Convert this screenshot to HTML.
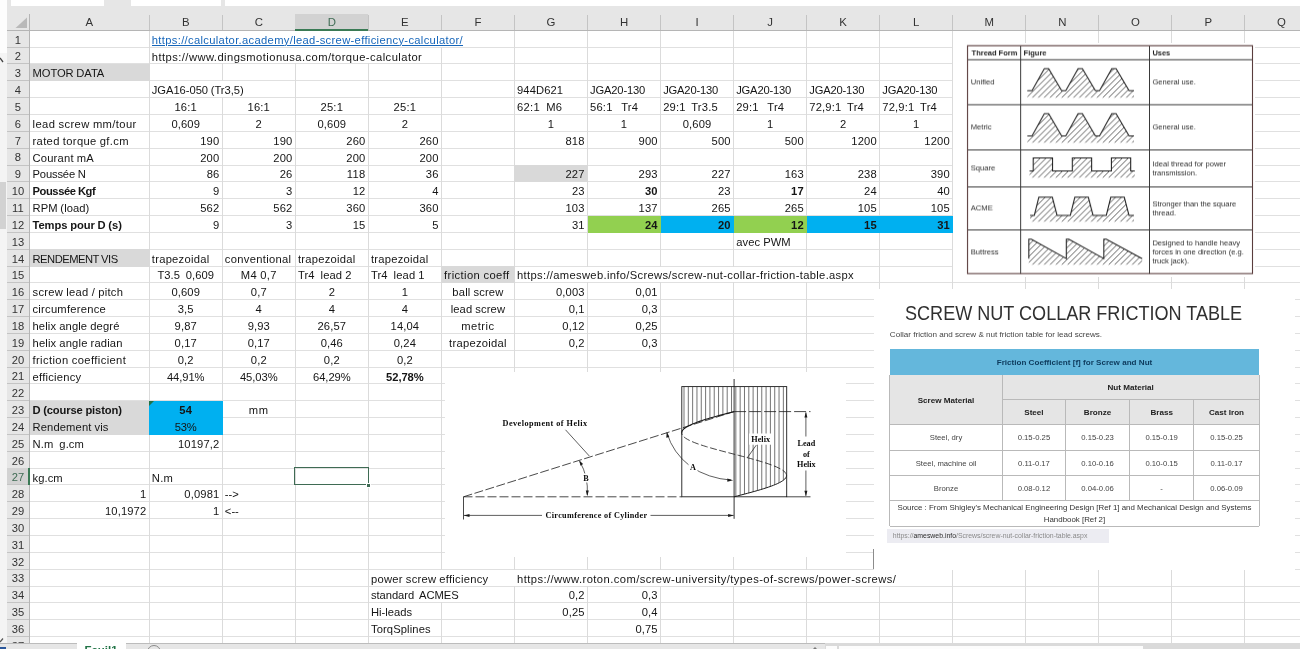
<!DOCTYPE html><html><head><meta charset="utf-8"><title>sheet</title><style>

html,body{margin:0;padding:0}
body{width:1300px;height:649px;overflow:hidden;position:relative;background:#fff;font-family:"Liberation Sans",sans-serif;color:#1a1a1a}
div,span,svg{position:absolute}
.c{font-size:11.2px;line-height:16.84px;height:16.84px;white-space:pre;color:#151515;word-spacing:-0.3px}
.b{font-weight:bold}
.r{text-align:right}.m{text-align:center}
.hl{background:#e0e0e0;height:1px}
.vl{background:#dbdbdb;width:1px}
.ch{font-size:11.4px;color:#333;text-align:center;line-height:16px;height:16px;top:14px}
.rh{font-size:11.2px;color:#333;text-align:center;line-height:16.84px;height:16.84px;left:6.5px;width:22.8px}

</style></head><body><div id="root" style="left:0;top:0;width:1300px;height:649px;overflow:hidden;will-change:transform">
<div style="left:6.5px;top:0;width:1293.5px;height:30.3px;background:#e6e6e6"></div>
<div style="left:0;top:0;width:6.5px;height:53px;background:#fdfdfd"></div>
<div style="left:0;top:53px;width:6.5px;height:596px;background:#f4f4f4"></div>
<div style="left:0;top:182.4px;width:5.5px;height:47px;background:#d2d2d2"></div>
<div style="left:6.5px;top:30.3px;width:22.8px;height:613px;background:#e6e6e6"></div>
<div style="left:10.5px;top:0;width:93.5px;height:5.5px;background:#fff"></div>
<div style="left:130.5px;top:0;width:90px;height:5.5px;background:#fff"></div>
<div style="left:224.5px;top:0;width:1076px;height:5.5px;background:#fff"></div>
<svg style="left:14px;top:17px" width="14" height="12"><polygon points="13,0.5 13,11 1.5,11" fill="#b9b9b9"/></svg>
<div class="hl" style="left:29.3px;top:46.64px;width:1270.7px"></div>
<div class="hl" style="left:29.3px;top:63.48px;width:1270.7px"></div>
<div class="hl" style="left:29.3px;top:80.32px;width:1270.7px"></div>
<div class="hl" style="left:29.3px;top:97.16px;width:1270.7px"></div>
<div class="hl" style="left:29.3px;top:114.00px;width:1270.7px"></div>
<div class="hl" style="left:29.3px;top:130.84px;width:1270.7px"></div>
<div class="hl" style="left:29.3px;top:147.68px;width:1270.7px"></div>
<div class="hl" style="left:29.3px;top:164.52px;width:1270.7px"></div>
<div class="hl" style="left:29.3px;top:181.36px;width:1270.7px"></div>
<div class="hl" style="left:29.3px;top:198.20px;width:1270.7px"></div>
<div class="hl" style="left:29.3px;top:215.04px;width:1270.7px"></div>
<div class="hl" style="left:29.3px;top:231.88px;width:1270.7px"></div>
<div class="hl" style="left:29.3px;top:248.72px;width:1270.7px"></div>
<div class="hl" style="left:29.3px;top:265.56px;width:1270.7px"></div>
<div class="hl" style="left:29.3px;top:282.40px;width:1270.7px"></div>
<div class="hl" style="left:29.3px;top:299.24px;width:1270.7px"></div>
<div class="hl" style="left:29.3px;top:316.08px;width:1270.7px"></div>
<div class="hl" style="left:29.3px;top:332.92px;width:1270.7px"></div>
<div class="hl" style="left:29.3px;top:349.76px;width:1270.7px"></div>
<div class="hl" style="left:29.3px;top:366.60px;width:1270.7px"></div>
<div class="hl" style="left:29.3px;top:383.44px;width:1270.7px"></div>
<div class="hl" style="left:29.3px;top:400.28px;width:1270.7px"></div>
<div class="hl" style="left:29.3px;top:417.12px;width:1270.7px"></div>
<div class="hl" style="left:29.3px;top:433.96px;width:1270.7px"></div>
<div class="hl" style="left:29.3px;top:450.80px;width:1270.7px"></div>
<div class="hl" style="left:29.3px;top:467.64px;width:1270.7px"></div>
<div class="hl" style="left:29.3px;top:484.48px;width:1270.7px"></div>
<div class="hl" style="left:29.3px;top:501.32px;width:1270.7px"></div>
<div class="hl" style="left:29.3px;top:518.16px;width:1270.7px"></div>
<div class="hl" style="left:29.3px;top:535.00px;width:1270.7px"></div>
<div class="hl" style="left:29.3px;top:551.84px;width:1270.7px"></div>
<div class="hl" style="left:29.3px;top:568.68px;width:1270.7px"></div>
<div class="hl" style="left:29.3px;top:585.52px;width:1270.7px"></div>
<div class="hl" style="left:29.3px;top:602.36px;width:1270.7px"></div>
<div class="hl" style="left:29.3px;top:619.20px;width:1270.7px"></div>
<div class="hl" style="left:29.3px;top:636.04px;width:1270.7px"></div>
<div class="hl" style="left:29.3px;top:652.88px;width:1270.7px"></div>
<div class="vl" style="left:148.70px;top:30.3px;height:612.7px"></div>
<div class="vl" style="left:221.75px;top:30.3px;height:612.7px"></div>
<div class="vl" style="left:294.80px;top:30.3px;height:612.7px"></div>
<div class="vl" style="left:367.85px;top:30.3px;height:612.7px"></div>
<div class="vl" style="left:440.90px;top:30.3px;height:612.7px"></div>
<div class="vl" style="left:513.95px;top:30.3px;height:612.7px"></div>
<div class="vl" style="left:587.00px;top:30.3px;height:612.7px"></div>
<div class="vl" style="left:660.05px;top:30.3px;height:612.7px"></div>
<div class="vl" style="left:733.10px;top:30.3px;height:612.7px"></div>
<div class="vl" style="left:806.15px;top:30.3px;height:612.7px"></div>
<div class="vl" style="left:879.20px;top:30.3px;height:612.7px"></div>
<div class="vl" style="left:952.25px;top:30.3px;height:612.7px"></div>
<div class="vl" style="left:1025.30px;top:30.3px;height:612.7px"></div>
<div class="vl" style="left:1098.35px;top:30.3px;height:612.7px"></div>
<div class="vl" style="left:1171.40px;top:30.3px;height:612.7px"></div>
<div class="vl" style="left:1244.45px;top:30.3px;height:612.7px"></div>
<div class="vl" style="left:1317.50px;top:30.3px;height:612.7px"></div>
<div style="left:29.30px;top:63.98px;width:120.40px;height:17.34px;background:#d9d9d9"></div>
<div style="left:29.30px;top:249.22px;width:120.40px;height:17.34px;background:#d9d9d9"></div>
<div style="left:441.40px;top:266.06px;width:73.55px;height:17.34px;background:#d9d9d9"></div>
<div style="left:514.45px;top:165.02px;width:73.55px;height:17.34px;background:#d9d9d9"></div>
<div style="left:29.30px;top:400.78px;width:120.40px;height:17.34px;background:#d9d9d9"></div>
<div style="left:29.30px;top:417.62px;width:120.40px;height:17.34px;background:#d9d9d9"></div>
<div style="left:149.20px;top:400.78px;width:73.55px;height:17.34px;background:#00b0f0"></div>
<div style="left:149.20px;top:417.62px;width:73.55px;height:17.34px;background:#00b0f0"></div>
<div style="left:587.50px;top:215.54px;width:73.55px;height:17.34px;background:#92d050"></div>
<div style="left:660.55px;top:215.54px;width:73.55px;height:17.34px;background:#00b0f0"></div>
<div style="left:733.60px;top:215.54px;width:73.55px;height:17.34px;background:#92d050"></div>
<div style="left:806.65px;top:215.54px;width:73.55px;height:17.34px;background:#00b0f0"></div>
<div style="left:879.70px;top:215.54px;width:73.55px;height:17.34px;background:#00b0f0"></div>
<div style="left:6.5px;top:29.8px;width:1293.5px;height:1px;background:#b5b5b5"></div>
<div style="left:28.8px;top:14px;width:1px;height:629px;background:#b5b5b5"></div>
<div style="left:148.70px;top:15px;width:1px;height:15px;background:#c4c4c4"></div>
<div style="left:221.75px;top:15px;width:1px;height:15px;background:#c4c4c4"></div>
<div style="left:294.80px;top:15px;width:1px;height:15px;background:#c4c4c4"></div>
<div style="left:367.85px;top:15px;width:1px;height:15px;background:#c4c4c4"></div>
<div style="left:440.90px;top:15px;width:1px;height:15px;background:#c4c4c4"></div>
<div style="left:513.95px;top:15px;width:1px;height:15px;background:#c4c4c4"></div>
<div style="left:587.00px;top:15px;width:1px;height:15px;background:#c4c4c4"></div>
<div style="left:660.05px;top:15px;width:1px;height:15px;background:#c4c4c4"></div>
<div style="left:733.10px;top:15px;width:1px;height:15px;background:#c4c4c4"></div>
<div style="left:806.15px;top:15px;width:1px;height:15px;background:#c4c4c4"></div>
<div style="left:879.20px;top:15px;width:1px;height:15px;background:#c4c4c4"></div>
<div style="left:952.25px;top:15px;width:1px;height:15px;background:#c4c4c4"></div>
<div style="left:1025.30px;top:15px;width:1px;height:15px;background:#c4c4c4"></div>
<div style="left:1098.35px;top:15px;width:1px;height:15px;background:#c4c4c4"></div>
<div style="left:1171.40px;top:15px;width:1px;height:15px;background:#c4c4c4"></div>
<div style="left:1244.45px;top:15px;width:1px;height:15px;background:#c4c4c4"></div>
<div style="left:1317.50px;top:15px;width:1px;height:15px;background:#c4c4c4"></div>
<div style="left:6.5px;top:46.64px;width:22.8px;height:1px;background:#c4c4c4"></div>
<div style="left:6.5px;top:63.48px;width:22.8px;height:1px;background:#c4c4c4"></div>
<div style="left:6.5px;top:80.32px;width:22.8px;height:1px;background:#c4c4c4"></div>
<div style="left:6.5px;top:97.16px;width:22.8px;height:1px;background:#c4c4c4"></div>
<div style="left:6.5px;top:114.00px;width:22.8px;height:1px;background:#c4c4c4"></div>
<div style="left:6.5px;top:130.84px;width:22.8px;height:1px;background:#c4c4c4"></div>
<div style="left:6.5px;top:147.68px;width:22.8px;height:1px;background:#c4c4c4"></div>
<div style="left:6.5px;top:164.52px;width:22.8px;height:1px;background:#c4c4c4"></div>
<div style="left:6.5px;top:181.36px;width:22.8px;height:1px;background:#c4c4c4"></div>
<div style="left:6.5px;top:198.20px;width:22.8px;height:1px;background:#c4c4c4"></div>
<div style="left:6.5px;top:215.04px;width:22.8px;height:1px;background:#c4c4c4"></div>
<div style="left:6.5px;top:231.88px;width:22.8px;height:1px;background:#c4c4c4"></div>
<div style="left:6.5px;top:248.72px;width:22.8px;height:1px;background:#c4c4c4"></div>
<div style="left:6.5px;top:265.56px;width:22.8px;height:1px;background:#c4c4c4"></div>
<div style="left:6.5px;top:282.40px;width:22.8px;height:1px;background:#c4c4c4"></div>
<div style="left:6.5px;top:299.24px;width:22.8px;height:1px;background:#c4c4c4"></div>
<div style="left:6.5px;top:316.08px;width:22.8px;height:1px;background:#c4c4c4"></div>
<div style="left:6.5px;top:332.92px;width:22.8px;height:1px;background:#c4c4c4"></div>
<div style="left:6.5px;top:349.76px;width:22.8px;height:1px;background:#c4c4c4"></div>
<div style="left:6.5px;top:366.60px;width:22.8px;height:1px;background:#c4c4c4"></div>
<div style="left:6.5px;top:383.44px;width:22.8px;height:1px;background:#c4c4c4"></div>
<div style="left:6.5px;top:400.28px;width:22.8px;height:1px;background:#c4c4c4"></div>
<div style="left:6.5px;top:417.12px;width:22.8px;height:1px;background:#c4c4c4"></div>
<div style="left:6.5px;top:433.96px;width:22.8px;height:1px;background:#c4c4c4"></div>
<div style="left:6.5px;top:450.80px;width:22.8px;height:1px;background:#c4c4c4"></div>
<div style="left:6.5px;top:467.64px;width:22.8px;height:1px;background:#c4c4c4"></div>
<div style="left:6.5px;top:484.48px;width:22.8px;height:1px;background:#c4c4c4"></div>
<div style="left:6.5px;top:501.32px;width:22.8px;height:1px;background:#c4c4c4"></div>
<div style="left:6.5px;top:518.16px;width:22.8px;height:1px;background:#c4c4c4"></div>
<div style="left:6.5px;top:535.00px;width:22.8px;height:1px;background:#c4c4c4"></div>
<div style="left:6.5px;top:551.84px;width:22.8px;height:1px;background:#c4c4c4"></div>
<div style="left:6.5px;top:568.68px;width:22.8px;height:1px;background:#c4c4c4"></div>
<div style="left:6.5px;top:585.52px;width:22.8px;height:1px;background:#c4c4c4"></div>
<div style="left:6.5px;top:602.36px;width:22.8px;height:1px;background:#c4c4c4"></div>
<div style="left:6.5px;top:619.20px;width:22.8px;height:1px;background:#c4c4c4"></div>
<div style="left:6.5px;top:636.04px;width:22.8px;height:1px;background:#c4c4c4"></div>
<div style="left:6.5px;top:652.88px;width:22.8px;height:1px;background:#c4c4c4"></div>
<div style="left:295.30px;top:14px;width:73.05px;height:15.3px;background:#d2d2d2"></div>
<div style="left:295.30px;top:29.3px;width:73.05px;height:1.4px;background:#3a7a55"></div>
<div style="left:6.5px;top:468.14px;width:22px;height:16.34px;background:#d2d2d2"></div>
<div style="left:28.3px;top:468.14px;width:1.4px;height:16.84px;background:#3a7a55"></div>
<div class="ch" style="left:29.30px;width:119.90px;">A</div>
<div class="ch" style="left:149.20px;width:73.05px;">B</div>
<div class="ch" style="left:222.25px;width:73.05px;">C</div>
<div class="ch" style="left:295.30px;width:73.05px; color:#3f6b54;">D</div>
<div class="ch" style="left:368.35px;width:73.05px;">E</div>
<div class="ch" style="left:441.40px;width:73.05px;">F</div>
<div class="ch" style="left:514.45px;width:73.05px;">G</div>
<div class="ch" style="left:587.50px;width:73.05px;">H</div>
<div class="ch" style="left:660.55px;width:73.05px;">I</div>
<div class="ch" style="left:733.60px;width:73.05px;">J</div>
<div class="ch" style="left:806.65px;width:73.05px;">K</div>
<div class="ch" style="left:879.70px;width:73.05px;">L</div>
<div class="ch" style="left:952.75px;width:73.05px;">M</div>
<div class="ch" style="left:1025.80px;width:73.05px;">N</div>
<div class="ch" style="left:1098.85px;width:73.05px;">O</div>
<div class="ch" style="left:1171.90px;width:73.05px;">P</div>
<div class="ch" style="left:1244.95px;width:73.05px;">Q</div>
<div class="rh" style="top:31.60px;">1</div>
<div class="rh" style="top:48.44px;">2</div>
<div class="rh" style="top:65.28px;">3</div>
<div class="rh" style="top:82.12px;">4</div>
<div class="rh" style="top:98.96px;">5</div>
<div class="rh" style="top:115.80px;">6</div>
<div class="rh" style="top:132.64px;">7</div>
<div class="rh" style="top:149.48px;">8</div>
<div class="rh" style="top:166.32px;">9</div>
<div class="rh" style="top:183.16px;">10</div>
<div class="rh" style="top:200.00px;">11</div>
<div class="rh" style="top:216.84px;">12</div>
<div class="rh" style="top:233.68px;">13</div>
<div class="rh" style="top:250.52px;">14</div>
<div class="rh" style="top:267.36px;">15</div>
<div class="rh" style="top:284.20px;">16</div>
<div class="rh" style="top:301.04px;">17</div>
<div class="rh" style="top:317.88px;">18</div>
<div class="rh" style="top:334.72px;">19</div>
<div class="rh" style="top:351.56px;">20</div>
<div class="rh" style="top:368.40px;">21</div>
<div class="rh" style="top:385.24px;">22</div>
<div class="rh" style="top:402.08px;">23</div>
<div class="rh" style="top:418.92px;">24</div>
<div class="rh" style="top:435.76px;">25</div>
<div class="rh" style="top:452.60px;">26</div>
<div class="rh" style="top:469.44px; color:#3f6b54;">27</div>
<div class="rh" style="top:486.28px;">28</div>
<div class="rh" style="top:503.12px;">29</div>
<div class="rh" style="top:519.96px;">30</div>
<div class="rh" style="top:536.80px;">31</div>
<div class="rh" style="top:553.64px;">32</div>
<div class="rh" style="top:570.48px;">33</div>
<div class="rh" style="top:587.32px;">34</div>
<div class="rh" style="top:604.16px;">35</div>
<div class="rh" style="top:621.00px;">36</div>
<div class="rh" style="top:637.84px;">37</div>
<div class="c" style="left:151.80px;top:30.80px;height:15.84px;overflow:hidden;background:#fff;padding-right:2px;color:#1666ba;text-decoration:underline;text-decoration-thickness:0.8px;text-underline-offset:1.5px;letter-spacing:0.33px;"><span style="position:relative;top:0.9px">https://calculator.academy/lead-screw-efficiency-calculator/</span></div>
<div class="c" style="left:151.80px;top:47.64px;height:15.84px;overflow:hidden;background:#fff;padding-right:2px;letter-spacing:0.44px;"><span style="position:relative;top:0.9px">https://www.dingsmotionusa.com/torque-calculator</span></div>
<div class="c" style="left:32.50px;top:65.38px;letter-spacing:-0.07px;">MOTOR DATA</div>
<div class="c" style="left:151.80px;top:81.32px;height:15.84px;overflow:hidden;background:#fff;padding-right:2px;letter-spacing:-0.04px;"><span style="position:relative;top:0.9px">JGA16-050 (Tr3,5)</span></div>
<div class="c" style="left:517.05px;top:82.22px;letter-spacing:0.09px;">944D621</div>
<div class="c" style="left:590.10px;top:82.22px;letter-spacing:-0.18px;">JGA20-130</div>
<div class="c" style="left:663.15px;top:82.22px;letter-spacing:-0.18px;">JGA20-130</div>
<div class="c" style="left:736.20px;top:82.22px;letter-spacing:-0.18px;">JGA20-130</div>
<div class="c" style="left:809.25px;top:82.22px;letter-spacing:-0.18px;">JGA20-130</div>
<div class="c" style="left:882.30px;top:82.22px;letter-spacing:-0.18px;">JGA20-130</div>
<div class="c m" style="left:149.20px;width:73.05px;top:99.06px;letter-spacing:0.18px;">16:1</div>
<div class="c m" style="left:222.25px;width:73.05px;top:99.06px;letter-spacing:0.18px;">16:1</div>
<div class="c m" style="left:295.30px;width:73.05px;top:99.06px;letter-spacing:0.18px;">25:1</div>
<div class="c m" style="left:368.35px;width:73.05px;top:99.06px;letter-spacing:0.18px;">25:1</div>
<div class="c" style="left:517.05px;top:99.06px;letter-spacing:0.30px;">62:1  M6</div>
<div class="c" style="left:590.10px;top:99.06px;letter-spacing:0.16px;">56:1   Tr4</div>
<div class="c" style="left:663.15px;top:99.06px;letter-spacing:0.16px;">29:1  Tr3.5</div>
<div class="c" style="left:736.20px;top:99.06px;letter-spacing:0.16px;">29:1   Tr4</div>
<div class="c" style="left:809.25px;top:99.06px;letter-spacing:0.16px;">72,9:1  Tr4</div>
<div class="c" style="left:882.30px;top:99.06px;letter-spacing:0.16px;">72,9:1  Tr4</div>
<div class="c" style="left:32.50px;top:115.90px;letter-spacing:0.40px;">lead screw mm/tour</div>
<div class="c m" style="left:149.20px;width:73.05px;top:115.90px;letter-spacing:0.13px;">0,609</div>
<div class="c m" style="left:222.25px;width:73.05px;top:115.90px;letter-spacing:0.16px;">2</div>
<div class="c m" style="left:295.30px;width:73.05px;top:115.90px;letter-spacing:0.13px;">0,609</div>
<div class="c m" style="left:368.35px;width:73.05px;top:115.90px;letter-spacing:0.16px;">2</div>
<div class="c m" style="left:514.45px;width:73.05px;top:115.90px;letter-spacing:0.16px;">1</div>
<div class="c m" style="left:587.50px;width:73.05px;top:115.90px;letter-spacing:0.16px;">1</div>
<div class="c m" style="left:660.55px;width:73.05px;top:115.90px;letter-spacing:0.13px;">0,609</div>
<div class="c m" style="left:733.60px;width:73.05px;top:115.90px;letter-spacing:0.16px;">1</div>
<div class="c m" style="left:806.65px;width:73.05px;top:115.90px;letter-spacing:0.16px;">2</div>
<div class="c m" style="left:879.70px;width:73.05px;top:115.90px;letter-spacing:0.16px;">1</div>
<div class="c" style="left:32.50px;top:132.74px;letter-spacing:0.34px;">rated torque gf.cm</div>
<div class="c r" style="left:149.20px;width:70.21px;top:132.74px;letter-spacing:0.16px;">190</div>
<div class="c r" style="left:222.25px;width:70.21px;top:132.74px;letter-spacing:0.16px;">190</div>
<div class="c r" style="left:295.30px;width:70.21px;top:132.74px;letter-spacing:0.16px;">260</div>
<div class="c r" style="left:368.35px;width:70.21px;top:132.74px;letter-spacing:0.16px;">260</div>
<div class="c r" style="left:514.45px;width:70.21px;top:132.74px;letter-spacing:0.16px;">818</div>
<div class="c r" style="left:587.50px;width:70.21px;top:132.74px;letter-spacing:0.16px;">900</div>
<div class="c r" style="left:660.55px;width:70.21px;top:132.74px;letter-spacing:0.16px;">500</div>
<div class="c r" style="left:733.60px;width:70.21px;top:132.74px;letter-spacing:0.16px;">500</div>
<div class="c r" style="left:806.65px;width:70.21px;top:132.74px;letter-spacing:0.16px;">1200</div>
<div class="c r" style="left:879.70px;width:70.21px;top:132.74px;letter-spacing:0.16px;">1200</div>
<div class="c" style="left:32.50px;top:149.58px;letter-spacing:0.20px;">Courant mA</div>
<div class="c r" style="left:149.20px;width:70.21px;top:149.58px;letter-spacing:0.16px;">200</div>
<div class="c r" style="left:222.25px;width:70.21px;top:149.58px;letter-spacing:0.16px;">200</div>
<div class="c r" style="left:295.30px;width:70.21px;top:149.58px;letter-spacing:0.16px;">200</div>
<div class="c r" style="left:368.35px;width:70.21px;top:149.58px;letter-spacing:0.16px;">200</div>
<div class="c" style="left:32.50px;top:166.42px;letter-spacing:-0.15px;">Poussée N</div>
<div class="c r" style="left:149.20px;width:70.21px;top:166.42px;letter-spacing:0.16px;">86</div>
<div class="c r" style="left:222.25px;width:70.21px;top:166.42px;letter-spacing:0.16px;">26</div>
<div class="c r" style="left:295.30px;width:70.48px;top:166.42px;letter-spacing:0.43px;">118</div>
<div class="c r" style="left:368.35px;width:70.21px;top:166.42px;letter-spacing:0.16px;">36</div>
<div class="c r" style="left:514.45px;width:70.21px;top:166.42px;letter-spacing:0.16px;">227</div>
<div class="c r" style="left:587.50px;width:70.21px;top:166.42px;letter-spacing:0.16px;">293</div>
<div class="c r" style="left:660.55px;width:70.21px;top:166.42px;letter-spacing:0.16px;">227</div>
<div class="c r" style="left:733.60px;width:70.21px;top:166.42px;letter-spacing:0.16px;">163</div>
<div class="c r" style="left:806.65px;width:70.21px;top:166.42px;letter-spacing:0.16px;">238</div>
<div class="c r" style="left:879.70px;width:70.21px;top:166.42px;letter-spacing:0.16px;">390</div>
<div class="c b" style="left:32.50px;top:183.26px;letter-spacing:-0.42px;">Poussée Kgf</div>
<div class="c r" style="left:149.20px;width:70.21px;top:183.26px;letter-spacing:0.16px;">9</div>
<div class="c r" style="left:222.25px;width:70.21px;top:183.26px;letter-spacing:0.16px;">3</div>
<div class="c r" style="left:295.30px;width:70.21px;top:183.26px;letter-spacing:0.16px;">12</div>
<div class="c r" style="left:368.35px;width:70.21px;top:183.26px;letter-spacing:0.16px;">4</div>
<div class="c r" style="left:514.45px;width:70.21px;top:183.26px;letter-spacing:0.16px;">23</div>
<div class="c b r" style="left:587.50px;width:70.21px;top:183.26px;letter-spacing:0.16px;">30</div>
<div class="c r" style="left:660.55px;width:70.21px;top:183.26px;letter-spacing:0.16px;">23</div>
<div class="c b r" style="left:733.60px;width:70.21px;top:183.26px;letter-spacing:0.16px;">17</div>
<div class="c r" style="left:806.65px;width:70.21px;top:183.26px;letter-spacing:0.16px;">24</div>
<div class="c r" style="left:879.70px;width:70.21px;top:183.26px;letter-spacing:0.16px;">40</div>
<div class="c" style="left:32.50px;top:200.10px;letter-spacing:0.05px;">RPM (load)</div>
<div class="c r" style="left:149.20px;width:70.21px;top:200.10px;letter-spacing:0.16px;">562</div>
<div class="c r" style="left:222.25px;width:70.21px;top:200.10px;letter-spacing:0.16px;">562</div>
<div class="c r" style="left:295.30px;width:70.21px;top:200.10px;letter-spacing:0.16px;">360</div>
<div class="c r" style="left:368.35px;width:70.21px;top:200.10px;letter-spacing:0.16px;">360</div>
<div class="c r" style="left:514.45px;width:70.21px;top:200.10px;letter-spacing:0.16px;">103</div>
<div class="c r" style="left:587.50px;width:70.21px;top:200.10px;letter-spacing:0.16px;">137</div>
<div class="c r" style="left:660.55px;width:70.21px;top:200.10px;letter-spacing:0.16px;">265</div>
<div class="c r" style="left:733.60px;width:70.21px;top:200.10px;letter-spacing:0.16px;">265</div>
<div class="c r" style="left:806.65px;width:70.21px;top:200.10px;letter-spacing:0.16px;">105</div>
<div class="c r" style="left:879.70px;width:70.21px;top:200.10px;letter-spacing:0.16px;">105</div>
<div class="c b" style="left:32.50px;top:216.94px;letter-spacing:-0.06px;">Temps pour D (s)</div>
<div class="c r" style="left:149.20px;width:70.21px;top:216.94px;letter-spacing:0.16px;">9</div>
<div class="c r" style="left:222.25px;width:70.21px;top:216.94px;letter-spacing:0.16px;">3</div>
<div class="c r" style="left:295.30px;width:70.21px;top:216.94px;letter-spacing:0.16px;">15</div>
<div class="c r" style="left:368.35px;width:70.21px;top:216.94px;letter-spacing:0.16px;">5</div>
<div class="c r" style="left:514.45px;width:70.21px;top:216.94px;letter-spacing:0.16px;">31</div>
<div class="c b r" style="left:587.50px;width:70.21px;top:216.94px;letter-spacing:0.16px;">24</div>
<div class="c b r" style="left:660.55px;width:70.21px;top:216.94px;letter-spacing:0.16px;">20</div>
<div class="c b r" style="left:733.60px;width:70.21px;top:216.94px;letter-spacing:0.16px;">12</div>
<div class="c b r" style="left:806.65px;width:70.21px;top:216.94px;letter-spacing:0.16px;">15</div>
<div class="c b r" style="left:879.70px;width:70.21px;top:216.94px;letter-spacing:0.16px;">31</div>
<div class="c" style="left:736.20px;top:233.78px;letter-spacing:0.10px;">avec PWM</div>
<div class="c" style="left:32.50px;top:250.62px;letter-spacing:-0.49px;">RENDEMENT VIS</div>
<div class="c" style="left:151.80px;top:250.62px;letter-spacing:0.26px;">trapezoidal</div>
<div class="c" style="left:224.85px;top:250.62px;letter-spacing:0.30px;">conventional</div>
<div class="c" style="left:297.90px;top:250.62px;letter-spacing:0.26px;">trapezoidal</div>
<div class="c" style="left:370.95px;top:250.62px;letter-spacing:0.26px;">trapezoidal</div>
<div class="c m" style="left:149.20px;width:73.05px;top:267.46px;letter-spacing:0.04px;">T3.5  0,609</div>
<div class="c m" style="left:222.25px;width:73.05px;top:267.46px;letter-spacing:0.33px;">M4 0,7</div>
<div class="c" style="left:297.90px;top:267.46px;letter-spacing:0.13px;">Tr4  lead 2</div>
<div class="c" style="left:370.95px;top:267.46px;letter-spacing:0.13px;">Tr4  lead 1</div>
<div class="c" style="left:444.00px;top:267.46px;letter-spacing:0.41px;">friction coeff</div>
<div class="c" style="left:517.05px;top:266.56px;height:15.84px;overflow:hidden;background:#fff;padding-right:2px;letter-spacing:0.33px;"><span style="position:relative;top:0.9px">https://amesweb.info/Screws/screw-nut-collar-friction-table.aspx</span></div>
<div class="c" style="left:32.50px;top:284.30px;letter-spacing:0.29px;">screw lead / pitch</div>
<div class="c m" style="left:149.20px;width:73.05px;top:284.30px;letter-spacing:0.13px;">0,609</div>
<div class="c m" style="left:222.25px;width:73.05px;top:284.30px;letter-spacing:0.12px;">0,7</div>
<div class="c m" style="left:295.30px;width:73.05px;top:284.30px;letter-spacing:0.16px;">2</div>
<div class="c m" style="left:368.35px;width:73.05px;top:284.30px;letter-spacing:0.16px;">1</div>
<div class="c m" style="left:441.40px;width:73.05px;top:284.30px;letter-spacing:0.17px;">ball screw</div>
<div class="c r" style="left:514.45px;width:70.18px;top:284.30px;letter-spacing:0.13px;">0,003</div>
<div class="c r" style="left:587.50px;width:70.18px;top:284.30px;letter-spacing:0.13px;">0,01</div>
<div class="c" style="left:32.50px;top:301.14px;letter-spacing:0.25px;">circumference</div>
<div class="c m" style="left:149.20px;width:73.05px;top:301.14px;letter-spacing:0.12px;">3,5</div>
<div class="c m" style="left:222.25px;width:73.05px;top:301.14px;letter-spacing:0.16px;">4</div>
<div class="c m" style="left:295.30px;width:73.05px;top:301.14px;letter-spacing:0.16px;">4</div>
<div class="c m" style="left:368.35px;width:73.05px;top:301.14px;letter-spacing:0.16px;">4</div>
<div class="c m" style="left:441.40px;width:73.05px;top:301.14px;letter-spacing:0.14px;">lead screw</div>
<div class="c r" style="left:514.45px;width:70.17px;top:301.14px;letter-spacing:0.12px;">0,1</div>
<div class="c r" style="left:587.50px;width:70.17px;top:301.14px;letter-spacing:0.12px;">0,3</div>
<div class="c" style="left:32.50px;top:317.98px;letter-spacing:0.14px;">helix angle degré</div>
<div class="c m" style="left:149.20px;width:73.05px;top:317.98px;letter-spacing:0.13px;">9,87</div>
<div class="c m" style="left:222.25px;width:73.05px;top:317.98px;letter-spacing:0.13px;">9,93</div>
<div class="c m" style="left:295.30px;width:73.05px;top:317.98px;letter-spacing:0.13px;">26,57</div>
<div class="c m" style="left:368.35px;width:73.05px;top:317.98px;letter-spacing:0.13px;">14,04</div>
<div class="c m" style="left:441.40px;width:73.05px;top:317.98px;letter-spacing:0.45px;">metric</div>
<div class="c r" style="left:514.45px;width:70.18px;top:317.98px;letter-spacing:0.13px;">0,12</div>
<div class="c r" style="left:587.50px;width:70.18px;top:317.98px;letter-spacing:0.13px;">0,25</div>
<div class="c" style="left:32.50px;top:334.82px;letter-spacing:0.17px;">helix angle radian</div>
<div class="c m" style="left:149.20px;width:73.05px;top:334.82px;letter-spacing:0.13px;">0,17</div>
<div class="c m" style="left:222.25px;width:73.05px;top:334.82px;letter-spacing:0.13px;">0,17</div>
<div class="c m" style="left:295.30px;width:73.05px;top:334.82px;letter-spacing:0.13px;">0,46</div>
<div class="c m" style="left:368.35px;width:73.05px;top:334.82px;letter-spacing:0.13px;">0,24</div>
<div class="c m" style="left:441.40px;width:73.05px;top:334.82px;letter-spacing:0.26px;">trapezoidal</div>
<div class="c r" style="left:514.45px;width:70.17px;top:334.82px;letter-spacing:0.12px;">0,2</div>
<div class="c r" style="left:587.50px;width:70.17px;top:334.82px;letter-spacing:0.12px;">0,3</div>
<div class="c" style="left:32.50px;top:351.66px;letter-spacing:0.39px;">friction coefficient</div>
<div class="c m" style="left:149.20px;width:73.05px;top:351.66px;letter-spacing:0.12px;">0,2</div>
<div class="c m" style="left:222.25px;width:73.05px;top:351.66px;letter-spacing:0.12px;">0,2</div>
<div class="c m" style="left:295.30px;width:73.05px;top:351.66px;letter-spacing:0.12px;">0,2</div>
<div class="c m" style="left:368.35px;width:73.05px;top:351.66px;letter-spacing:0.12px;">0,2</div>
<div class="c" style="left:32.50px;top:368.50px;letter-spacing:0.25px;">efficiency</div>
<div class="c m" style="left:149.20px;width:73.05px;top:368.50px;letter-spacing:-0.05px;">44,91%</div>
<div class="c m" style="left:222.25px;width:73.05px;top:368.50px;letter-spacing:-0.05px;">45,03%</div>
<div class="c m" style="left:295.30px;width:73.05px;top:368.50px;letter-spacing:-0.05px;">64,29%</div>
<div class="c b m" style="left:368.35px;width:73.05px;top:368.50px;letter-spacing:-0.05px;">52,78%</div>
<div class="c b" style="left:32.50px;top:402.18px;letter-spacing:-0.12px;">D (course piston)</div>
<div class="c b m" style="left:149.20px;width:73.05px;top:402.18px;letter-spacing:0.16px;">54</div>
<div class="c m" style="left:222.25px;width:73.05px;top:402.18px;letter-spacing:0.74px;">mm</div>
<div class="c" style="left:32.50px;top:419.02px;letter-spacing:0.13px;">Rendement vis</div>
<div class="c m" style="left:149.20px;width:73.05px;top:419.02px;letter-spacing:-0.21px;">53%</div>
<div class="c" style="left:32.50px;top:435.86px;letter-spacing:0.13px;">N.m  g.cm</div>
<div class="c r" style="left:149.20px;width:70.19px;top:435.86px;letter-spacing:0.14px;">10197,2</div>
<div class="c" style="left:32.50px;top:469.54px;letter-spacing:0.07px;">kg.cm</div>
<div class="c" style="left:151.80px;top:469.54px;letter-spacing:0.28px;">N.m</div>
<div class="c r" style="left:29.30px;width:117.06px;top:486.38px;letter-spacing:0.16px;">1</div>
<div class="c r" style="left:149.20px;width:70.19px;top:486.38px;letter-spacing:0.14px;">0,0981</div>
<div class="c" style="left:224.85px;top:486.38px;letter-spacing:-0.00px;">--&gt;</div>
<div class="c r" style="left:29.30px;width:117.04px;top:503.22px;letter-spacing:0.14px;">10,1972</div>
<div class="c r" style="left:149.20px;width:70.21px;top:503.22px;letter-spacing:0.16px;">1</div>
<div class="c" style="left:224.85px;top:503.22px;letter-spacing:-0.00px;">&lt;--</div>
<div class="c" style="left:370.95px;top:569.68px;height:15.84px;overflow:hidden;background:#fff;padding-right:2px;width:143px;letter-spacing:0.26px;"><span style="position:relative;top:0.9px">power screw efficiency</span></div>
<div class="c" style="left:517.05px;top:569.68px;height:15.84px;overflow:hidden;background:#fff;padding-right:2px;letter-spacing:0.43px;"><span style="position:relative;top:0.9px">https://www.roton.com/screw-university/types-of-screws/power-screws/</span></div>
<div class="c" style="left:370.95px;top:586.52px;height:15.84px;overflow:hidden;background:#fff;padding-right:2px;letter-spacing:-0.04px;"><span style="position:relative;top:0.9px">standard  ACMES</span></div>
<div class="c r" style="left:514.45px;width:70.17px;top:587.42px;letter-spacing:0.12px;">0,2</div>
<div class="c r" style="left:587.50px;width:70.17px;top:587.42px;letter-spacing:0.12px;">0,3</div>
<div class="c" style="left:370.95px;top:604.26px;letter-spacing:0.03px;">Hi-leads</div>
<div class="c r" style="left:514.45px;width:70.18px;top:604.26px;letter-spacing:0.13px;">0,25</div>
<div class="c r" style="left:587.50px;width:70.17px;top:604.26px;letter-spacing:0.12px;">0,4</div>
<div class="c" style="left:370.95px;top:621.10px;letter-spacing:0.12px;">TorqSplines</div>
<div class="c r" style="left:587.50px;width:70.18px;top:621.10px;letter-spacing:0.13px;">0,75</div>
<svg style="left:149.20px;top:400.78px" width="6" height="6"><polygon points="0,0 5,0 0,5" fill="#1e7145"/></svg>
<div style="left:294.30px;top:467.24px;width:72.55px;height:16.24px;border:1.3px solid #3f6b54;border-top-width:1.8px;box-sizing:content-box"></div>
<div style="left:366.05px;top:482.68px;width:3.4px;height:3.4px;background:#3f6b54;border:0.6px solid #fff"></div>
<div style="left:444.5px;top:371.5px;width:401.0px;height:185.0px;background:#fff"></div>
<svg style="left:444.5px;top:371.5px" width="401.0" height="185.0" viewBox="444.5 371.5 401.0 185.0" font-family="Liberation Serif, serif" font-weight="bold" font-size="8.2" fill="#0a0a0a">
<defs><clipPath id="hc"><path d="M681.30,386.10 L733.60,386.10 L733.60,411.10 L733.60,411.10 L730.17,411.99 L726.75,412.88 L723.37,413.76 L720.02,414.65 L716.74,415.54 L713.53,416.43 L710.40,417.31 L707.38,418.20 L704.46,419.09 L701.67,419.98 L699.02,420.86 L696.51,421.75 L694.17,422.64 L691.99,423.53 L689.99,424.41 L688.18,425.30 L686.56,426.19 L685.14,427.08 L683.93,427.96 L682.94,428.85 L682.16,429.74 L681.60,430.62 L681.26,431.51 L681.15,432.40 Z M733.60,386.10 L786.20,386.10 L786.05,475.00 L785.94,475.89 L785.60,476.78 L785.04,477.66 L784.26,478.55 L783.27,479.44 L782.06,480.32 L780.64,481.21 L779.02,482.10 L777.21,482.99 L775.21,483.88 L773.03,484.76 L770.69,485.65 L768.18,486.54 L765.53,487.43 L762.74,488.31 L759.83,489.20 L756.80,490.09 L753.67,490.98 L750.46,491.86 L747.18,492.75 L743.83,493.64 L740.45,494.53 L737.03,495.41 L733.60,496.30 Z"/></clipPath></defs>
<g clip-path="url(#hc)" stroke="#3a3a3a" stroke-width="0.7">
<line x1="683.50" y1="386.1" x2="683.50" y2="496.3"/>
<line x1="687.82" y1="386.1" x2="687.82" y2="496.3"/>
<line x1="692.14" y1="386.1" x2="692.14" y2="496.3"/>
<line x1="696.46" y1="386.1" x2="696.46" y2="496.3"/>
<line x1="700.78" y1="386.1" x2="700.78" y2="496.3"/>
<line x1="705.10" y1="386.1" x2="705.10" y2="496.3"/>
<line x1="709.42" y1="386.1" x2="709.42" y2="496.3"/>
<line x1="713.74" y1="386.1" x2="713.74" y2="496.3"/>
<line x1="718.06" y1="386.1" x2="718.06" y2="496.3"/>
<line x1="722.38" y1="386.1" x2="722.38" y2="496.3"/>
<line x1="726.70" y1="386.1" x2="726.70" y2="496.3"/>
<line x1="731.02" y1="386.1" x2="731.02" y2="496.3"/>
<line x1="735.34" y1="386.1" x2="735.34" y2="496.3"/>
<line x1="739.66" y1="386.1" x2="739.66" y2="496.3"/>
<line x1="743.98" y1="386.1" x2="743.98" y2="496.3"/>
<line x1="748.30" y1="386.1" x2="748.30" y2="496.3"/>
<line x1="752.62" y1="386.1" x2="752.62" y2="496.3"/>
<line x1="756.94" y1="386.1" x2="756.94" y2="496.3"/>
<line x1="761.26" y1="386.1" x2="761.26" y2="496.3"/>
<line x1="765.58" y1="386.1" x2="765.58" y2="496.3"/>
<line x1="769.90" y1="386.1" x2="769.90" y2="496.3"/>
<line x1="774.22" y1="386.1" x2="774.22" y2="496.3"/>
<line x1="778.54" y1="386.1" x2="778.54" y2="496.3"/>
<line x1="782.86" y1="386.1" x2="782.86" y2="496.3"/>
</g>
<rect x="748.5" y="433" width="23.5" height="11.2" fill="#fff"/>
<rect x="681.3" y="386.1" width="104.9" height="110.2" stroke="#1a1a1a" fill="none" stroke-width="0.9"/>
<line x1="733.6" y1="378.5" x2="733.6" y2="518.3" stroke="#1a1a1a" fill="none" stroke-width="0.9"/>
<path d="M733.60,496.30 L737.03,495.41 L740.45,494.53 L743.83,493.64 L747.18,492.75 L750.46,491.86 L753.67,490.98 L756.80,490.09 L759.83,489.20 L762.74,488.31 L765.53,487.43 L768.18,486.54 L770.69,485.65 L773.03,484.76 L775.21,483.88 L777.21,482.99 L779.02,482.10 L780.64,481.21 L782.06,480.32 L783.27,479.44 L784.26,478.55 L785.04,477.66 L785.60,476.78 L785.94,475.89 L786.05,475.00" stroke="#1a1a1a" fill="none" stroke-width="1"/>
<path d="M681.15,432.40 L681.26,431.51 L681.60,430.62 L682.16,429.74 L682.94,428.85 L683.93,427.96 L685.14,427.08 L686.56,426.19 L688.18,425.30 L689.99,424.41 L691.99,423.53 L694.17,422.64 L696.51,421.75 L699.02,420.86 L701.67,419.98 L704.46,419.09 L707.38,418.20 L710.40,417.31 L713.53,416.43 L716.74,415.54 L720.02,414.65 L723.37,413.76 L726.75,412.88 L730.17,411.99 L733.60,411.10" stroke="#1a1a1a" fill="none" stroke-width="1.1"/>
<path d="M786.05,475.00 L785.89,473.94 L785.40,472.87 L784.60,471.81 L783.48,470.74 L782.06,469.68 L780.33,468.61 L778.32,467.55 L776.03,466.48 L773.48,465.42 L770.69,464.35 L767.66,463.29 L764.43,462.22 L761.01,461.16 L757.41,460.09 L753.67,459.03 L749.81,457.96 L745.84,456.90 L741.80,455.83 L737.72,454.76 L733.60,453.70 L729.48,452.63 L725.40,451.57 L721.36,450.50 L717.39,449.44 L713.53,448.38 L709.79,447.31 L706.19,446.25 L702.77,445.18 L699.54,444.12 L696.51,443.05 L693.72,441.99 L691.17,440.92 L688.88,439.86 L686.87,438.79 L685.14,437.73 L683.72,436.66 L682.60,435.60 L681.80,434.53 L681.31,433.47 L681.15,432.40" stroke="#1a1a1a" fill="none" stroke-width="0.8" stroke-dasharray="7 2.5"/>
<line x1="463" y1="496.3" x2="681.3" y2="496.3" stroke="#1a1a1a" fill="none" stroke-width="0.8" stroke-dasharray="9 3"/>
<line x1="463" y1="496.3" x2="733.6" y2="411.1" stroke="#1a1a1a" fill="none" stroke-width="0.8" stroke-dasharray="9 2.5"/>
<line x1="733.6" y1="411.1" x2="810" y2="411.1" stroke="#1a1a1a" fill="none" stroke-width="0.8" stroke-dasharray="12 3"/>
<line x1="786.2" y1="496.3" x2="810" y2="496.3" stroke="#1a1a1a" fill="none" stroke-width="0.8"/>
<line x1="805.4" y1="412.1" x2="805.4" y2="436" stroke="#1a1a1a" fill="none" stroke-width="0.7"/>
<line x1="805.4" y1="470" x2="805.4" y2="495.3" stroke="#1a1a1a" fill="none" stroke-width="0.7"/>
<polygon points="805.4,411.6 803.9,417.1 806.9,417.1" fill="#1a1a1a"/>
<polygon points="805.4,495.8 803.9,490.3 806.9,490.3" fill="#1a1a1a"/>
<text x="805.9" y="445.8" text-anchor="middle">Lead</text>
<text x="805.9" y="456.3" text-anchor="middle">of</text>
<text x="805.9" y="466.8" text-anchor="middle">Helix</text>
<line x1="463" y1="496.3" x2="463" y2="519" stroke="#1a1a1a" fill="none" stroke-width="0.8"/>
<line x1="463.5" y1="514.9" x2="541.5" y2="514.9" stroke="#1a1a1a" fill="none" stroke-width="0.7"/>
<line x1="650" y1="514.9" x2="733.1" y2="514.9" stroke="#1a1a1a" fill="none" stroke-width="0.7"/>
<polygon points="463.3,514.9 469,513.4 469,516.4" fill="#1a1a1a"/>
<polygon points="733.3000000000001,514.9 727.6,513.4 727.6,516.4" fill="#1a1a1a"/>
<text x="545" y="517.5" textLength="101.6" lengthAdjust="spacing">Circumference of Cylinder</text>
<text x="502" y="425.6" textLength="84.7" lengthAdjust="spacing">Development of Helix</text>
<line x1="565" y1="429.3" x2="588.8" y2="455.5" stroke="#1a1a1a" fill="none" stroke-width="0.7"/>
<path d="M579.3,461 Q588,476 586.8,494.5" stroke="#1a1a1a" fill="none" stroke-width="0.7"/>
<rect x="581" y="473" width="9" height="9" fill="#fff"/>
<text x="585.4" y="480.6" text-anchor="middle">B</text>
<polygon points="578.6,459.8 582.6,463.6 580,465.2" fill="#1a1a1a"/>
<polygon points="586.8,495.8 585.3,490 588.3,490" fill="#1a1a1a"/>
<path d="M666.6,432.6 Q672,452 690,466 Q708,478 730.5,479.6" stroke="#1a1a1a" fill="none" stroke-width="0.7"/>
<rect x="688" y="461.5" width="9" height="9" fill="#fff"/>
<text x="692.4" y="469.2" text-anchor="middle">A</text>
<polygon points="666.2,431.2 668.8,436.6 665.8,437.2" fill="#1a1a1a"/>
<polygon points="732.6,479.7 726.8,478 726.8,481.2" fill="#1a1a1a"/>
<text x="760.2" y="441.8" text-anchor="middle">Helix</text>
<line x1="755.8" y1="444.6" x2="747" y2="457" stroke="#1a1a1a" fill="none" stroke-width="0.7"/>
</svg>
<div style="left:873.5px;top:288.5px;width:421.0px;height:281.29999999999995px;background:#fff"></div>
<div style="left:905.2px;top:301.4px;font-size:21px;line-height:24px;white-space:nowrap;color:#303030;transform:scaleX(0.86);transform-origin:0 0">SCREW NUT COLLAR FRICTION TABLE</div>
<div style="left:889.8px;top:330.4px;font-size:8.1px;line-height:10px;white-space:nowrap;color:#444">Collar friction and screw &amp; nut friction table for lead screws.</div>
<div style="left:889.8px;top:348.8px;width:369.4px;height:25.9px;background:#64b7dc"></div>
<div style="left:889.8px;top:374.7px;width:369.4px;height:49.7px;background:#e5e5e5"></div>
<div style="left:889.8px;width:369.4px;top:349.8px;height:25.9px;line-height:25.9px;text-align:center;font-size:8.1px;white-space:nowrap;color:#0d3a5c;font-weight:bold;">Friction Coefficient [f] for Screw and Nut</div>
<div style="left:889.8px;width:112.4px;top:375.7px;height:49.7px;line-height:49.7px;text-align:center;font-size:8.1px;white-space:nowrap;color:#222;font-weight:bold;">Screw Material</div>
<div style="left:1002.2px;width:257.0px;top:375.7px;height:24.8px;line-height:24.8px;text-align:center;font-size:8.1px;white-space:nowrap;color:#222;font-weight:bold;">Nut Material</div>
<div style="left:1002.2px;width:63.5px;top:400.5px;height:24.9px;line-height:24.9px;text-align:center;font-size:8.1px;white-space:nowrap;color:#222;font-weight:bold;">Steel</div>
<div style="left:1065.7px;width:63.8px;top:400.5px;height:24.9px;line-height:24.9px;text-align:center;font-size:8.1px;white-space:nowrap;color:#222;font-weight:bold;">Bronze</div>
<div style="left:1129.5px;width:64.3px;top:400.5px;height:24.9px;line-height:24.9px;text-align:center;font-size:8.1px;white-space:nowrap;color:#222;font-weight:bold;">Brass</div>
<div style="left:1193.8px;width:65.4px;top:400.5px;height:24.9px;line-height:24.9px;text-align:center;font-size:8.1px;white-space:nowrap;color:#222;font-weight:bold;">Cast Iron</div>
<div style="left:889.8px;width:112.4px;top:425.4px;height:25.8px;line-height:25.8px;text-align:center;font-size:7.7px;white-space:nowrap;color:#444;">Steel, dry</div>
<div style="left:1002.2px;width:63.5px;top:425.4px;height:25.8px;line-height:25.8px;text-align:center;font-size:7.7px;white-space:nowrap;color:#444;">0.15-0.25</div>
<div style="left:1065.7px;width:63.8px;top:425.4px;height:25.8px;line-height:25.8px;text-align:center;font-size:7.7px;white-space:nowrap;color:#444;">0.15-0.23</div>
<div style="left:1129.5px;width:64.3px;top:425.4px;height:25.8px;line-height:25.8px;text-align:center;font-size:7.7px;white-space:nowrap;color:#444;">0.15-0.19</div>
<div style="left:1193.8px;width:65.4px;top:425.4px;height:25.8px;line-height:25.8px;text-align:center;font-size:7.7px;white-space:nowrap;color:#444;">0.15-0.25</div>
<div style="left:889.8px;width:112.4px;top:451.2px;height:25.2px;line-height:25.2px;text-align:center;font-size:7.7px;white-space:nowrap;color:#444;">Steel, machine oil</div>
<div style="left:1002.2px;width:63.5px;top:451.2px;height:25.2px;line-height:25.2px;text-align:center;font-size:7.7px;white-space:nowrap;color:#444;">0.11-0.17</div>
<div style="left:1065.7px;width:63.8px;top:451.2px;height:25.2px;line-height:25.2px;text-align:center;font-size:7.7px;white-space:nowrap;color:#444;">0.10-0.16</div>
<div style="left:1129.5px;width:64.3px;top:451.2px;height:25.2px;line-height:25.2px;text-align:center;font-size:7.7px;white-space:nowrap;color:#444;">0.10-0.15</div>
<div style="left:1193.8px;width:65.4px;top:451.2px;height:25.2px;line-height:25.2px;text-align:center;font-size:7.7px;white-space:nowrap;color:#444;">0.11-0.17</div>
<div style="left:889.8px;width:112.4px;top:476.4px;height:25.0px;line-height:25.0px;text-align:center;font-size:7.7px;white-space:nowrap;color:#444;">Bronze</div>
<div style="left:1002.2px;width:63.5px;top:476.4px;height:25.0px;line-height:25.0px;text-align:center;font-size:7.7px;white-space:nowrap;color:#444;">0.08-0.12</div>
<div style="left:1065.7px;width:63.8px;top:476.4px;height:25.0px;line-height:25.0px;text-align:center;font-size:7.7px;white-space:nowrap;color:#444;">0.04-0.06</div>
<div style="left:1129.5px;width:64.3px;top:476.4px;height:25.0px;line-height:25.0px;text-align:center;font-size:7.7px;white-space:nowrap;color:#444;">-</div>
<div style="left:1193.8px;width:65.4px;top:476.4px;height:25.0px;line-height:25.0px;text-align:center;font-size:7.7px;white-space:nowrap;color:#444;">0.06-0.09</div>
<div style="left:889.8px;width:369.4px;top:502.4px;text-align:center;font-size:7.9px;line-height:11.9px;color:#333;white-space:nowrap">Source : From Shigley's Mechanical Engineering Design [Ref 1] and Mechanical Design and Systems<br>Handbook [Ref 2]</div>
<div style="left:1002.2px;top:399.0px;width:257.0px;height:1px;background:#b9b9b9"></div>
<div style="left:889.8px;top:423.9px;width:369.4px;height:1px;background:#b9b9b9"></div>
<div style="left:889.8px;top:449.7px;width:369.4px;height:1px;background:#b9b9b9"></div>
<div style="left:889.8px;top:474.9px;width:369.4px;height:1px;background:#b9b9b9"></div>
<div style="left:889.8px;top:499.9px;width:369.4px;height:1px;background:#b9b9b9"></div>
<div style="left:889.8px;top:525.9px;width:369.4px;height:1px;background:#b9b9b9"></div>
<div style="left:889.3px;top:374.7px;width:1px;height:151.7px;background:#b9b9b9"></div>
<div style="left:1258.7px;top:374.7px;width:1px;height:151.7px;background:#b9b9b9"></div>
<div style="left:1001.7px;top:374.7px;width:1px;height:125.7px;background:#b9b9b9"></div>
<div style="left:1065.2px;top:399.5px;width:1px;height:100.9px;background:#b9b9b9"></div>
<div style="left:1129.0px;top:399.5px;width:1px;height:100.9px;background:#b9b9b9"></div>
<div style="left:1193.3px;top:399.5px;width:1px;height:100.9px;background:#b9b9b9"></div>
<div style="left:887px;top:529px;width:221.7px;height:13.7px;background:#ececf2"></div>
<div style="left:892.8px;top:529px;height:13.7px;line-height:13.2px;font-size:6.9px;white-space:nowrap;color:#8a8a8a">https://<span style="position:static;color:#2b2b2b">amesweb.info</span>/Screws/screw-nut-collar-friction-table.aspx</div>
<div style="left:873.0px;top:549.0px;width:1px;height:20.3px;background:#8c8c8c"></div>
<div style="left:953px;top:42.6px;width:302px;height:234.4px;background:#fff"></div>
<svg style="left:953px;top:42.6px" width="302" height="234.4" viewBox="953 42.6 302 234.4" font-family="Liberation Sans, sans-serif">
<line x1="967.5" y1="59.3" x2="1252.5" y2="59.3" stroke="#3a3a3a" stroke-width="1"/>
<line x1="967.5" y1="104.3" x2="1252.5" y2="104.3" stroke="#3a3a3a" stroke-width="1"/>
<line x1="967.5" y1="149.5" x2="1252.5" y2="149.5" stroke="#3a3a3a" stroke-width="1"/>
<line x1="967.5" y1="186.5" x2="1252.5" y2="186.5" stroke="#3a3a3a" stroke-width="1"/>
<line x1="967.5" y1="229.5" x2="1252.5" y2="229.5" stroke="#3a3a3a" stroke-width="1"/>
<line x1="1020.6" y1="45.3" x2="1020.6" y2="273.2" stroke="#3a3a3a" stroke-width="1"/>
<line x1="1149.5" y1="45.3" x2="1149.5" y2="273.2" stroke="#3a3a3a" stroke-width="1"/>
<rect x="967.5" y="45.3" width="285.0" height="227.89999999999998" fill="none" stroke="#5a3d3d" stroke-width="1.1"/>
<text x="971.6" y="54.6" font-size="7.5" font-weight="bold" fill="#222">Thread Form</text>
<text x="1023.6" y="54.6" font-size="7.5" font-weight="bold" fill="#222">Figure</text>
<text x="1152.4" y="54.6" font-size="7.5" font-weight="bold" fill="#222">Uses</text>
<text x="970.8" y="84.2" font-size="7.6" fill="#2e2e2e">Unified</text>
<text x="970.8" y="129.2" font-size="7.6" fill="#2e2e2e">Metric</text>
<text x="970.8" y="170.2" font-size="7.6" fill="#2e2e2e">Square</text>
<text x="970.8" y="210.2" font-size="7.6" fill="#2e2e2e">ACME</text>
<text x="970.8" y="253.89999999999998" font-size="7.6" fill="#2e2e2e">Buttress</text>
<text x="1152.4" y="84.2" font-size="7.6" fill="#2e2e2e">General use.</text>
<text x="1152.4" y="129.2" font-size="7.6" fill="#2e2e2e">General use.</text>
<text x="1152.4" y="165.89999999999998" font-size="7.6" fill="#2e2e2e">Ideal thread for power</text>
<text x="1152.4" y="174.6" font-size="7.6" fill="#2e2e2e">transmission.</text>
<text x="1152.4" y="206.2" font-size="7.6" fill="#2e2e2e">Stronger than the square</text>
<text x="1152.4" y="215.0" font-size="7.6" fill="#2e2e2e">thread.</text>
<text x="1152.4" y="245.2" font-size="7.6" fill="#2e2e2e">Designed to handle heavy</text>
<text x="1152.4" y="253.89999999999998" font-size="7.6" fill="#2e2e2e">forces in one direction (e.g.</text>
<text x="1152.4" y="262.7" font-size="7.6" fill="#2e2e2e">truck jack).</text>
<clipPath id="tc1"><path d="M1027.40,90.30 L1032.00,90.30 L1044.30,68.30 L1048.60,68.30 L1061.60,90.30 L1065.75,90.30 L1078.05,68.30 L1082.35,68.30 L1095.35,90.30 L1099.50,90.30 L1111.80,68.30 L1116.10,68.30 L1129.10,90.30 L1134.00,90.30 L1134.00,97.20 L1027.40,97.20 Z"/></clipPath>
<g clip-path="url(#tc1)" stroke="#2a2a2a" stroke-width="0.75">
<line x1="996.18" y1="98.20" x2="1028.08" y2="66.30"/>
<line x1="1002.05" y1="98.20" x2="1033.95" y2="66.30"/>
<line x1="1007.92" y1="98.20" x2="1039.82" y2="66.30"/>
<line x1="1013.79" y1="98.20" x2="1045.69" y2="66.30"/>
<line x1="1019.66" y1="98.20" x2="1051.56" y2="66.30"/>
<line x1="1025.53" y1="98.20" x2="1057.43" y2="66.30"/>
<line x1="1031.40" y1="98.20" x2="1063.30" y2="66.30"/>
<line x1="1037.27" y1="98.20" x2="1069.17" y2="66.30"/>
<line x1="1043.14" y1="98.20" x2="1075.04" y2="66.30"/>
<line x1="1049.01" y1="98.20" x2="1080.91" y2="66.30"/>
<line x1="1054.88" y1="98.20" x2="1086.78" y2="66.30"/>
<line x1="1060.75" y1="98.20" x2="1092.65" y2="66.30"/>
<line x1="1066.62" y1="98.20" x2="1098.52" y2="66.30"/>
<line x1="1072.49" y1="98.20" x2="1104.39" y2="66.30"/>
<line x1="1078.36" y1="98.20" x2="1110.26" y2="66.30"/>
<line x1="1084.23" y1="98.20" x2="1116.13" y2="66.30"/>
<line x1="1090.10" y1="98.20" x2="1122.00" y2="66.30"/>
<line x1="1095.97" y1="98.20" x2="1127.87" y2="66.30"/>
<line x1="1101.84" y1="98.20" x2="1133.74" y2="66.30"/>
<line x1="1107.71" y1="98.20" x2="1139.61" y2="66.30"/>
<line x1="1113.58" y1="98.20" x2="1145.48" y2="66.30"/>
<line x1="1119.45" y1="98.20" x2="1151.35" y2="66.30"/>
<line x1="1125.32" y1="98.20" x2="1157.22" y2="66.30"/>
<line x1="1131.19" y1="98.20" x2="1163.09" y2="66.30"/>
</g>
<path d="M1027.40,90.30 L1032.00,90.30 L1044.30,68.30 L1048.60,68.30 L1061.60,90.30 L1065.75,90.30 L1078.05,68.30 L1082.35,68.30 L1095.35,90.30 L1099.50,90.30 L1111.80,68.30 L1116.10,68.30 L1129.10,90.30 L1134.00,90.30" fill="none" stroke="#1e1e1e" stroke-width="1.05" stroke-linejoin="miter"/>
<clipPath id="tc2"><path d="M1027.40,135.40 L1032.00,135.40 L1044.30,113.20 L1048.60,113.20 L1061.60,135.40 L1065.75,135.40 L1078.05,113.20 L1082.35,113.20 L1095.35,135.40 L1099.50,135.40 L1111.80,113.20 L1116.10,113.20 L1129.10,135.40 L1134.00,135.40 L1134.00,142.30 L1027.40,142.30 Z"/></clipPath>
<g clip-path="url(#tc2)" stroke="#2a2a2a" stroke-width="0.75">
<line x1="996.18" y1="143.30" x2="1028.28" y2="111.20"/>
<line x1="1002.05" y1="143.30" x2="1034.15" y2="111.20"/>
<line x1="1007.92" y1="143.30" x2="1040.02" y2="111.20"/>
<line x1="1013.79" y1="143.30" x2="1045.89" y2="111.20"/>
<line x1="1019.66" y1="143.30" x2="1051.76" y2="111.20"/>
<line x1="1025.53" y1="143.30" x2="1057.63" y2="111.20"/>
<line x1="1031.40" y1="143.30" x2="1063.50" y2="111.20"/>
<line x1="1037.27" y1="143.30" x2="1069.37" y2="111.20"/>
<line x1="1043.14" y1="143.30" x2="1075.24" y2="111.20"/>
<line x1="1049.01" y1="143.30" x2="1081.11" y2="111.20"/>
<line x1="1054.88" y1="143.30" x2="1086.98" y2="111.20"/>
<line x1="1060.75" y1="143.30" x2="1092.85" y2="111.20"/>
<line x1="1066.62" y1="143.30" x2="1098.72" y2="111.20"/>
<line x1="1072.49" y1="143.30" x2="1104.59" y2="111.20"/>
<line x1="1078.36" y1="143.30" x2="1110.46" y2="111.20"/>
<line x1="1084.23" y1="143.30" x2="1116.33" y2="111.20"/>
<line x1="1090.10" y1="143.30" x2="1122.20" y2="111.20"/>
<line x1="1095.97" y1="143.30" x2="1128.07" y2="111.20"/>
<line x1="1101.84" y1="143.30" x2="1133.94" y2="111.20"/>
<line x1="1107.71" y1="143.30" x2="1139.81" y2="111.20"/>
<line x1="1113.58" y1="143.30" x2="1145.68" y2="111.20"/>
<line x1="1119.45" y1="143.30" x2="1151.55" y2="111.20"/>
<line x1="1125.32" y1="143.30" x2="1157.42" y2="111.20"/>
<line x1="1131.19" y1="143.30" x2="1163.29" y2="111.20"/>
</g>
<path d="M1027.40,135.40 L1032.00,135.40 L1044.30,113.20 L1048.60,113.20 L1061.60,135.40 L1065.75,135.40 L1078.05,113.20 L1082.35,113.20 L1095.35,135.40 L1099.50,135.40 L1111.80,113.20 L1116.10,113.20 L1129.10,135.40 L1134.00,135.40" fill="none" stroke="#1e1e1e" stroke-width="1.05" stroke-linejoin="miter"/>
<clipPath id="tc3"><path d="M1029.50,170.50 L1033.20,170.50 L1033.20,157.50 L1052.50,157.50 L1052.50,170.50 L1072.30,170.50 L1072.30,157.50 L1091.60,157.50 L1091.60,170.50 L1111.40,170.50 L1111.40,157.50 L1130.70,157.50 L1130.70,170.50 L1134.80,170.50 L1134.80,177.20 L1029.50,177.20 Z"/></clipPath>
<g clip-path="url(#tc3)" stroke="#2a2a2a" stroke-width="0.75">
<line x1="1007.92" y1="178.20" x2="1030.62" y2="155.50"/>
<line x1="1013.79" y1="178.20" x2="1036.49" y2="155.50"/>
<line x1="1019.66" y1="178.20" x2="1042.36" y2="155.50"/>
<line x1="1025.53" y1="178.20" x2="1048.23" y2="155.50"/>
<line x1="1031.40" y1="178.20" x2="1054.10" y2="155.50"/>
<line x1="1037.27" y1="178.20" x2="1059.97" y2="155.50"/>
<line x1="1043.14" y1="178.20" x2="1065.84" y2="155.50"/>
<line x1="1049.01" y1="178.20" x2="1071.71" y2="155.50"/>
<line x1="1054.88" y1="178.20" x2="1077.58" y2="155.50"/>
<line x1="1060.75" y1="178.20" x2="1083.45" y2="155.50"/>
<line x1="1066.62" y1="178.20" x2="1089.32" y2="155.50"/>
<line x1="1072.49" y1="178.20" x2="1095.19" y2="155.50"/>
<line x1="1078.36" y1="178.20" x2="1101.06" y2="155.50"/>
<line x1="1084.23" y1="178.20" x2="1106.93" y2="155.50"/>
<line x1="1090.10" y1="178.20" x2="1112.80" y2="155.50"/>
<line x1="1095.97" y1="178.20" x2="1118.67" y2="155.50"/>
<line x1="1101.84" y1="178.20" x2="1124.54" y2="155.50"/>
<line x1="1107.71" y1="178.20" x2="1130.41" y2="155.50"/>
<line x1="1113.58" y1="178.20" x2="1136.28" y2="155.50"/>
<line x1="1119.45" y1="178.20" x2="1142.15" y2="155.50"/>
<line x1="1125.32" y1="178.20" x2="1148.02" y2="155.50"/>
<line x1="1131.19" y1="178.20" x2="1153.89" y2="155.50"/>
</g>
<path d="M1029.50,170.50 L1033.20,170.50 L1033.20,157.50 L1052.50,157.50 L1052.50,170.50 L1072.30,170.50 L1072.30,157.50 L1091.60,157.50 L1091.60,170.50 L1111.40,170.50 L1111.40,157.50 L1130.70,157.50 L1130.70,170.50 L1134.80,170.50" fill="none" stroke="#1e1e1e" stroke-width="1.05" stroke-linejoin="miter"/>
<clipPath id="tc4"><path d="M1030.00,215.00 L1034.30,215.00 L1038.80,196.80 L1052.30,196.80 L1057.00,215.00 L1070.30,215.00 L1074.80,196.80 L1088.30,196.80 L1093.00,215.00 L1106.30,215.00 L1110.80,196.80 L1124.30,196.80 L1129.00,215.00 L1134.00,215.00 L1134.00,221.30 L1030.00,221.30 Z"/></clipPath>
<g clip-path="url(#tc4)" stroke="#2a2a2a" stroke-width="0.75">
<line x1="1002.05" y1="222.30" x2="1029.55" y2="194.80"/>
<line x1="1007.92" y1="222.30" x2="1035.42" y2="194.80"/>
<line x1="1013.79" y1="222.30" x2="1041.29" y2="194.80"/>
<line x1="1019.66" y1="222.30" x2="1047.16" y2="194.80"/>
<line x1="1025.53" y1="222.30" x2="1053.03" y2="194.80"/>
<line x1="1031.40" y1="222.30" x2="1058.90" y2="194.80"/>
<line x1="1037.27" y1="222.30" x2="1064.77" y2="194.80"/>
<line x1="1043.14" y1="222.30" x2="1070.64" y2="194.80"/>
<line x1="1049.01" y1="222.30" x2="1076.51" y2="194.80"/>
<line x1="1054.88" y1="222.30" x2="1082.38" y2="194.80"/>
<line x1="1060.75" y1="222.30" x2="1088.25" y2="194.80"/>
<line x1="1066.62" y1="222.30" x2="1094.12" y2="194.80"/>
<line x1="1072.49" y1="222.30" x2="1099.99" y2="194.80"/>
<line x1="1078.36" y1="222.30" x2="1105.86" y2="194.80"/>
<line x1="1084.23" y1="222.30" x2="1111.73" y2="194.80"/>
<line x1="1090.10" y1="222.30" x2="1117.60" y2="194.80"/>
<line x1="1095.97" y1="222.30" x2="1123.47" y2="194.80"/>
<line x1="1101.84" y1="222.30" x2="1129.34" y2="194.80"/>
<line x1="1107.71" y1="222.30" x2="1135.21" y2="194.80"/>
<line x1="1113.58" y1="222.30" x2="1141.08" y2="194.80"/>
<line x1="1119.45" y1="222.30" x2="1146.95" y2="194.80"/>
<line x1="1125.32" y1="222.30" x2="1152.82" y2="194.80"/>
<line x1="1131.19" y1="222.30" x2="1158.69" y2="194.80"/>
</g>
<path d="M1030.00,215.00 L1034.30,215.00 L1038.80,196.80 L1052.30,196.80 L1057.00,215.00 L1070.30,215.00 L1074.80,196.80 L1088.30,196.80 L1093.00,215.00 L1106.30,215.00 L1110.80,196.80 L1124.30,196.80 L1129.00,215.00 L1134.00,215.00" fill="none" stroke="#1e1e1e" stroke-width="1.05" stroke-linejoin="miter"/>
<clipPath id="tc5"><path d="M1028.80,258.20 L1028.80,238.80 L1031.30,238.80 L1066.30,258.20 L1066.30,238.80 L1068.80,238.80 L1103.80,258.20 L1103.80,238.80 L1106.30,238.80 L1142.20,258.20 L1142.2,264.3 L1028.8,264.3 Z"/></clipPath>
<g clip-path="url(#tc5)" stroke="#2a2a2a" stroke-width="0.75">
<line x1="1002.05" y1="265.30" x2="1030.55" y2="236.80"/>
<line x1="1007.92" y1="265.30" x2="1036.42" y2="236.80"/>
<line x1="1013.79" y1="265.30" x2="1042.29" y2="236.80"/>
<line x1="1019.66" y1="265.30" x2="1048.16" y2="236.80"/>
<line x1="1025.53" y1="265.30" x2="1054.03" y2="236.80"/>
<line x1="1031.40" y1="265.30" x2="1059.90" y2="236.80"/>
<line x1="1037.27" y1="265.30" x2="1065.77" y2="236.80"/>
<line x1="1043.14" y1="265.30" x2="1071.64" y2="236.80"/>
<line x1="1049.01" y1="265.30" x2="1077.51" y2="236.80"/>
<line x1="1054.88" y1="265.30" x2="1083.38" y2="236.80"/>
<line x1="1060.75" y1="265.30" x2="1089.25" y2="236.80"/>
<line x1="1066.62" y1="265.30" x2="1095.12" y2="236.80"/>
<line x1="1072.49" y1="265.30" x2="1100.99" y2="236.80"/>
<line x1="1078.36" y1="265.30" x2="1106.86" y2="236.80"/>
<line x1="1084.23" y1="265.30" x2="1112.73" y2="236.80"/>
<line x1="1090.10" y1="265.30" x2="1118.60" y2="236.80"/>
<line x1="1095.97" y1="265.30" x2="1124.47" y2="236.80"/>
<line x1="1101.84" y1="265.30" x2="1130.34" y2="236.80"/>
<line x1="1107.71" y1="265.30" x2="1136.21" y2="236.80"/>
<line x1="1113.58" y1="265.30" x2="1142.08" y2="236.80"/>
<line x1="1119.45" y1="265.30" x2="1147.95" y2="236.80"/>
<line x1="1125.32" y1="265.30" x2="1153.82" y2="236.80"/>
<line x1="1131.19" y1="265.30" x2="1159.69" y2="236.80"/>
<line x1="1137.06" y1="265.30" x2="1165.56" y2="236.80"/>
<line x1="1142.93" y1="265.30" x2="1171.43" y2="236.80"/>
</g>
<path d="M1028.80,258.20 L1028.80,238.80 L1031.30,238.80 L1066.30,258.20 L1066.30,238.80 L1068.80,238.80 L1103.80,258.20 L1103.80,238.80 L1106.30,238.80 L1142.20,258.20" fill="none" stroke="#1e1e1e" stroke-width="1.05"/>
</svg>
<div style="left:0;top:642.6px;width:1300px;height:7px;background:#e6e6e6;border-top:1px solid #bcbcbc"></div>
<div style="left:76.5px;top:643px;width:49px;height:7px;background:#fff"></div>
<div class="b" style="left:77px;top:643.4px;width:48px;text-align:center;font-size:11.5px;color:#217346;line-height:14px">Feuil1</div>
<div style="left:0;top:647px;width:6px;height:2px;background:#2b579a"></div><svg style="left:0;top:638px" width="4" height="5"><path d="M0,4 L3,0.5" stroke="#555" stroke-width="1.2" fill="none"/></svg><svg style="left:0;top:57px" width="5" height="6"><path d="M0,1 L3,5" stroke="#444" stroke-width="1.3" fill="none"/></svg>
<div style="left:147px;top:645px;width:12px;height:12px;border:1px solid #8a8a8a;border-radius:7px"></div>
<div style="left:824.6px;top:643.4px;width:476px;height:6px;background:#dadada"></div>
<div style="left:825.8px;top:645.6px;width:11.5px;height:4px;background:#fcfcfc"></div>
<div style="left:838.8px;top:645.6px;width:304.4px;height:4px;background:#fcfcfc"></div>
<svg style="left:812px;top:646.5px" width="6" height="3"><polygon points="3,0 6,3 0,3" fill="#777"/></svg>
</div></body></html>
